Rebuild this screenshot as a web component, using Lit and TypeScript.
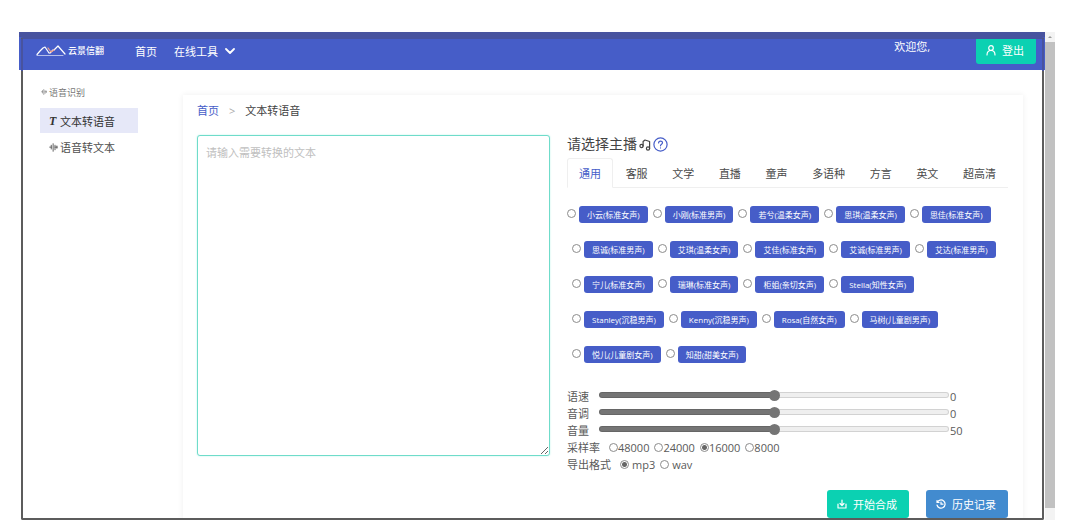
import { LitElement, html, css, svg } from "lit";
import { customElement, property, state } from "lit/decorators.js";

const VOICES = [
  "小云(标准女声)", "小刚(标准男声)", "若兮(温柔女声)", "思琪(温柔女声)", "思佳(标准女声)",
  "思诚(标准男声)", "艾琪(温柔女声)", "艾佳(标准女声)", "艾诚(标准男声)", "艾达(标准男声)",
  "宁儿(标准女声)", "瑞琳(标准女声)", "柜姐(亲切女声)", "Stella(知性女声)",
  "Stanley(沉稳男声)", "Kenny(沉稳男声)", "Rosa(自然女声)", "马树(儿童剧男声)",
  "悦儿(儿童剧女声)", "知甜(甜美女声)",
];
const TABS = ["通用", "客服", "文学", "直播", "童声", "多语种", "方言", "英文", "超高清"];
const RATES = ["48000", "24000", "16000", "8000"];
const FORMATS = ["mp3", "wav"];

const wave = svg`<path d="M1 5.500h2M3 3v5M5.500 1v10M8 3v6M8 5.500h3M10.500 4v3" />`;

const controls = css`
  * { box-sizing: border-box; }
  a { color: inherit; text-decoration: none; }
  button { font: inherit; cursor: pointer; }
  svg { display: block; fill: none; stroke: currentColor; stroke-width: 1.2; stroke-linecap: round; stroke-linejoin: round; flex: none; }
  .radio {
    appearance: none; flex: none; width: 9px; height: 9px; margin: 0;
    border: 1px solid #8c8c8c; border-radius: 50%; background: #fff;
  }
  .radio:checked { background: radial-gradient(circle, #666 0 2px, #fff 3px); }
  .action {
    display: inline-flex; align-items: center; justify-content: center; gap: 6px;
    height: 28px; padding: 0 10px 0 8px; border: 0; border-radius: 3px;
    background: #0bd1b2; color: #fff; line-height: 17px;
  }
  .action.blue { background: #428bcf; }
`;

@customElement("top-bar")
export class TopBar extends LitElement {
  static styles = [controls, css`
    :host { display: block; }
    .bar {
      display: flex; align-items: center; height: 38px; padding: 0 9px 4px 17px;
      background: #465dc8; color: #fff; border-top: 5px solid #48539f;
    }
    .brand { display: flex; align-items: center; gap: 2px; font-size: 9px; line-height: 12px; font-weight: 500; width: 99px; padding-bottom: 2px; }
    .brand .sun { stroke: #f0a08a; }
    .nav { display: flex; align-items: center; gap: 17px; flex: 1; }
    .menu { display: flex; align-items: center; gap: 7px; }
    .menu svg { stroke-width: 1.8; }
    .hello { align-self: flex-start; margin-right: 46px; line-height: 20px; }
    .action { width: 60px; height: 27px; align-self: flex-start; }
  `];
  render() {
    return html`
      <header class="bar">
        <a class="brand" href="#">
          <svg width="30" height="12" viewBox="0 0 30 12" stroke-width=".9">
            <path d="M1 9.500 4 6l3-3 2-1 4 6M14 8l3-3M18 5l4-4 7 8" />
            <path class="sun" d="M12 3l3 4 3-2" />
            <path d="M1 10.500h26" stroke-width=".6" />
          </svg>
          <span>云景信翻</span>
        </a>
        <nav class="nav">
          <a href="#">首页</a>
          <a class="menu" href="#">在线工具
            <svg width="10" height="7" viewBox="0 0 10 7"><path d="M1 1l4 4 4-4" /></svg>
          </a>
        </nav>
        <span class="hello">欢迎您,</span>
        <button class="action">
          <svg width="10" height="11" viewBox="0 0 10 11"><circle cx="5" cy="3" r="2.300" /><path d="M1 10c0-3 1.500-4.500 4-4.500S9 7 9 10" /></svg>
          登出
        </button>
      </header>`;
  }
}

@customElement("side-menu")
export class SideMenu extends LitElement {
  static styles = [controls, css`
    :host { display: block; }
    .title { display: flex; align-items: center; gap: 1px; margin: 0; font-size: 9px; font-weight: 400; line-height: 14px; color: #777; }
    .title svg { margin-bottom: 3px; }
    .list { display: grid; gap: 1px; list-style: none; margin: 8px 0 0; padding: 0; }
    .item { display: flex; align-items: center; gap: 2px; height: 25px; padding: 1px 0 0 9px; color: #505050; }
    .item.on { background: #e6e8f8; color: #333; }
    .t { font: italic bold 12px/17px "Liberation Serif", serif; width: 9px; }
  `];
  render() {
    return html`
      <h2 class="title"><svg width="8" height="6" viewBox="0 0 12 12">${wave}</svg>语音识别</h2>
      <ul class="list">
        <li><a class="item on" href="#"><span class="t">T</span>文本转语音</a></li>
        <li><a class="item" href="#"><svg width="9" height="9" viewBox="0 0 12 12">${wave}</svg>语音转文本</a></li>
      </ul>`;
  }
}

@customElement("range-row")
export class RangeRow extends LitElement {
  @property() label = "";
  @property({ type: Number }) min = 0;
  @property({ type: Number }) max = 100;
  @property({ type: Number }) value = 0;
  static styles = [controls, css`
    :host { display: flex; align-items: center; height: 17px; line-height: 17px; }
    .name { width: 32px; }
    .slider {
      appearance: none; flex: 1; min-width: 0; height: 6px; margin: 0 0 3px;
      border: 1px solid rgba(0, 0, 0, 0.12); border-radius: 3px;
      background: linear-gradient(90deg, #757575 var(--fill), #efefef var(--fill)) border-box;
    }
    .slider::-webkit-slider-thumb { appearance: none; width: 11px; height: 11px; border-radius: 50%; background: #757575; }
    .value { width: 59px; padding-left: 1px; }
  `];
  render() {
    const fill = ((this.value - this.min) / (this.max - this.min)) * 100;
    return html`
      <label class="name" for="r">${this.label}</label>
      <input id="r" class="slider" type="range" min=${this.min} max=${this.max} .value=${String(this.value)}
        style="--fill:${fill}%"
        @input=${(e: Event) => { this.value = Number((e.target as HTMLInputElement).value); }} />
      <output class="value" for="r">${this.value}</output>`;
  }
}

@customElement("voice-panel")
export class VoicePanel extends LitElement {
  @state() private tab = 0;
  static styles = [controls, css`
    :host { display: block; }
    .heading { display: flex; align-items: center; gap: 2px; margin: 0; font-size: 14px; font-weight: 400; line-height: 18px; color: #444; }
    .heading a { color: #465dc8; }
    .tabs { display: flex; justify-content: space-between; margin-top: 5px; border-bottom: 1px solid #efefef; }
    .tab {
      height: 30px; margin-bottom: -1px; padding: 0 11px; border: 1px solid transparent;
      background: none; color: #4a4a4a;
    }
    .tab.on { border-color: #efefef; border-bottom-color: #fff; border-radius: 3px 3px 0 0; color: #465dc8; background: #fff; }
    .voices { display: flex; flex-wrap: wrap; row-gap: 18px; margin: 18px 0 25px; padding: 0 3px 0 0; border: 0; }
    .voice { display: flex; align-items: center; gap: 3px; margin-left: 5px; }
    .voice:first-child { margin-left: 0; }
    .voice .radio { margin-bottom: 2px; }
    .pill { height: 17px; padding: 0 8px; border-radius: 3px; background: #465dc8; color: #fff; font-size: 8px; line-height: 17px; white-space: nowrap; }
    .options { display: flex; align-items: center; gap: 5px; height: 17px; line-height: 17px; }
    .options .lead { margin-right: 4px; }
    .opt { display: flex; align-items: center; }
    .wide .opt { gap: 3px; }
    .actions { display: flex; justify-content: flex-end; gap: 17px; margin-top: 17px; }
    .actions .action { width: 82px; }
  `];
  private radios(name: string, lead: string, items: string[], checked: number, cls = "") {
    return html`<div class="options ${cls}" role="radiogroup" aria-label=${lead}>
      <span class="lead">${lead}</span>
      ${items.map((t, i) => html`<label class="opt"><input class="radio" type="radio" name=${name} ?checked=${i === checked} />${t}</label>`)}
    </div>`;
  }
  render() {
    return html`
      <h2 class="heading">请选择主播
        <svg width="12" height="13" viewBox="0 0 12 13"><circle cx="2.500" cy="8" r="1.600" /><circle cx="9" cy="10.500" r="1.600" /><path d="M4.100 8V3.500L6 2l4.600 1.500v7" /></svg>
        <a href="#" aria-label="帮助"><svg width="15" height="15" viewBox="0 0 15 15"><circle cx="7.500" cy="7.500" r="6.600" /><path d="M5.600 6c0-2.600 3.900-2.500 3.900-.2 0 1.400-2 1.400-2 3M7.500 10.900v.1" /></svg></a>
      </h2>
      <div class="tabs" role="tablist">
        ${TABS.map((t, i) => html`<button role="tab" class="tab ${i === this.tab ? "on" : ""}" @click=${() => { this.tab = i; }}>${t}</button>`)}
      </div>
      <div class="voices" role="radiogroup" aria-label="主播">
        ${VOICES.map((v) => html`<label class="voice"><input class="radio" type="radio" name="voice" /><span class="pill">${v}</span></label>`)}
      </div>
      <range-row label="语速" min="-500" max="500" value="0"></range-row>
      <range-row label="音调" min="-500" max="500" value="0"></range-row>
      <range-row label="音量" min="0" max="100" value="50"></range-row>
      ${this.radios("rate", "采样率", RATES, 2)}
      ${this.radios("format", "导出格式", FORMATS, 0, "wide")}
      <div class="actions">
        <button class="action">
          <svg width="10" height="10" viewBox="0 0 10 10"><path d="M1 5v4h8V5M5 1v5M3 4.500l2 2 2-2" /></svg>开始合成
        </button>
        <button class="action blue">
          <svg width="10" height="10" viewBox="0 0 10 10"><path d="M1.200 3.500A4.100 4.100 0 1 1 1 6M1 1.500v2h2M5 3v2.200h2" /></svg>历史记录
        </button>
      </div>`;
  }
}

@customElement("app-root")
export class AppRoot extends LitElement {
  static styles = [controls, css`
    :host {
      display: flex; box-sizing: border-box; min-height: 100vh; padding: 32px 17px 6px 19px;
      background: #fff; color: #5a5a5a;
      font: 11px/17px "Open Sans", "Noto Sans CJK SC", sans-serif;
    }
    .window { position: relative; flex: 1; min-width: 0; display: flex; flex-direction: column; }
    .outline { position: absolute; inset: 5px 1px 0 2px; border: 2px solid #5c5c5c; border-top-color: #48539f; border-radius: 2px; pointer-events: none; }
    .outline::before, .outline::after { content: ""; position: absolute; top: 0; width: 2px; height: 32px; background: #48539f; }
    .outline::before { left: -2px; }
    .outline::after { right: -2px; }
    .body { flex: 1; display: flex; padding: 25px 22px 0 21px; }
    .side { width: 98px; margin-right: 45px; margin-top: -9px; }
    .card { flex: 1; min-width: 0; padding: 7px 15px 0 14px; background: #fff; box-shadow: 0 0 6px rgba(0, 0, 0, 0.07); clip-path: inset(-6px -6px 0 -6px); }
    .crumbs { display: flex; gap: 10px; line-height: 17px; color: #444; }
    .crumbs a { color: #465dc8; }
    .crumbs .sep { color: #aaa; }
    .cols { display: grid; grid-template-columns: 353fr 441fr; column-gap: 17px; align-items: start; margin-top: 16px; }
    .cols .text {
      display: block; width: 100%; height: 321px; margin: 0; padding: 8px; resize: vertical; outline: 0;
      appearance: none; border: 1px solid #6fdcca; border-radius: 3px; box-shadow: 0 0 2px #b8f2e8;
      background-color: #fff; color: #444; font: inherit;
    }
    .text::placeholder { color: #c0c0c0; }
    .scroll {
      display: flex; flex-direction: column; justify-content: space-between; width: 10px;
      background: #c1c1c1; border-top: 10px solid #f3f3f3; border-bottom: 12px solid #f3f3f3;
    }
    .scroll svg { margin-top: -7px; }
  `];
  render() {
    return html`
      <div class="window">
        <top-bar></top-bar>
        <div class="body">
          <side-menu class="side"></side-menu>
          <main class="card">
            <nav class="crumbs"><a href="#">首页</a><span class="sep">&gt;</span><span>文本转语音</span></nav>
            <div class="cols">
              <textarea class="text" aria-label="文本" placeholder="请输入需要转换的文本"></textarea>
              <voice-panel></voice-panel>
            </div>
          </main>
        </div>
        <div class="outline"></div>
      </div>
      <div class="scroll"><svg width="10" height="4" viewBox="0 0 10 4"><path d="M3 3l2-2 2 2z" fill="#999" stroke="none" /></svg></div>`;
  }
}
